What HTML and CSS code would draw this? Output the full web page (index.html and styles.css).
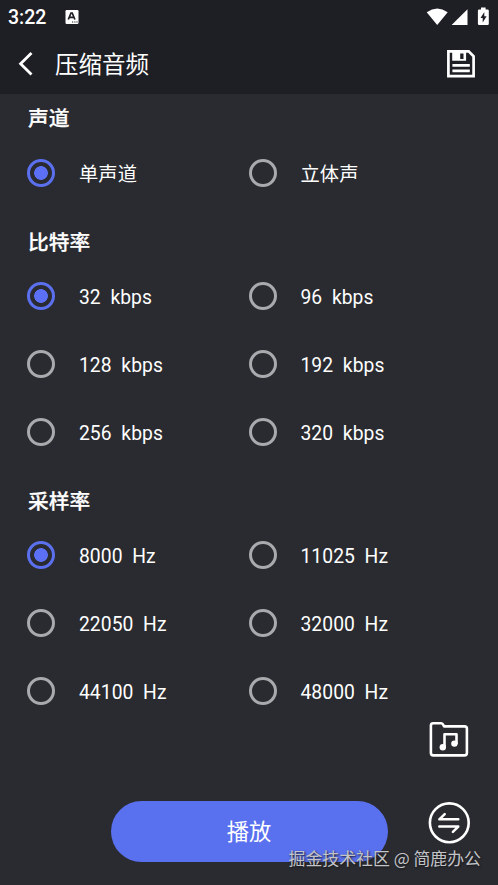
FILE: index.html
```
<!DOCTYPE html>
<html lang="zh-CN">
<head>
<meta charset="utf-8">
<title>压缩音频</title>
<link rel="stylesheet" href="styles.css">
</head>
<body>
<div class="screen">
  <header class="top">
    <div class="status">
      <span class="time">3:22</span>
      <svg class="input-icon" width="14" height="16" viewBox="0 0 14 16"><rect x="0.5" y="1" width="13" height="14" rx="1.2" fill="#fff"/><path d="M3.3 10.5 6 4h1.2l2.7 6.5M4.3 8.4h4.6" fill="none" stroke="#1e1e25" stroke-width="1.7"/><path d="M7 13h1.2M9.3 13h1.2M11.4 13h1.2" stroke="#1e1e25" stroke-width="1.2"/></svg>
      <svg class="signals" width="64" height="20" viewBox="0 0 64 20" fill="#fff"><path d="M0.7 5.2Q11.2-2.2 21.7 5.2L11.2 18Z"/><path d="M41.5 2.2V18H25.6Z"/><path fill-rule="evenodd" d="M55 0.6h4.6v1.9h2q1.2 0 1.2 1.2v13.1q0 1.2-1.2 1.2h-8.5q-1.2 0-1.2-1.2V3.7q0-1.2 1.2-1.2H55ZM58.3 5l-3.8 6h2.2v4.5l3.9-6.2h-2.3Z"/></svg>
    </div>
    <div class="bar">
      <svg class="back" width="16" height="26" viewBox="0 0 16 26"><path d="M13.5 2 2.6 12.7 13.5 23.4" fill="none" stroke="#fff" stroke-width="2.8"/></svg>
      <h1>压缩音频</h1>
      <svg class="save" width="28" height="28" viewBox="0 0 28 28"><path d="M1.4 1.4h20.3l4.9 4.9v19.9H1.4Z" fill="none" stroke="#fff" stroke-width="2.7"/><path fill="#fff" fill-rule="evenodd" d="M5.2 1.5h13.9v9.3H5.2ZM13.2 3.4v5.5h3.3V3.4Z"/><path d="M5.4 15.4h17.4M5.4 20.8h17.4" stroke="#fff" stroke-width="2.7"/></svg>
    </div>
  </header>
  <main>
    <section>
      <h2>声道</h2>
      <div class="options channels">
        <label class="option"><i class="radio on"></i><span>单声道</span></label>
        <label class="option"><i class="radio"></i><span>立体声</span></label>
      </div>
    </section>
    <section>
      <h2>比特率</h2>
      <div class="options">
        <label class="option"><i class="radio on"></i><span>32  kbps</span></label>
        <label class="option"><i class="radio"></i><span>96  kbps</span></label>
        <label class="option"><i class="radio"></i><span>128  kbps</span></label>
        <label class="option"><i class="radio"></i><span>192  kbps</span></label>
        <label class="option"><i class="radio"></i><span>256  kbps</span></label>
        <label class="option"><i class="radio"></i><span>320  kbps</span></label>
      </div>
    </section>
    <section>
      <h2>采样率</h2>
      <div class="options">
        <label class="option"><i class="radio on"></i><span>8000  Hz</span></label>
        <label class="option"><i class="radio"></i><span>11025  Hz</span></label>
        <label class="option"><i class="radio"></i><span>22050  Hz</span></label>
        <label class="option"><i class="radio"></i><span>32000  Hz</span></label>
        <label class="option"><i class="radio"></i><span>44100  Hz</span></label>
        <label class="option"><i class="radio"></i><span>48000  Hz</span></label>
      </div>
    </section>
  </main>
  <button class="play">播放</button>
  <div class="floating">
    <svg width="40" height="36" viewBox="0 0 40 36" fill="none" stroke="#fff" stroke-width="2.6" stroke-linejoin="round"><path d="M4.200 2.200h8q1 0 1.600 1l1.300 2.200H35.600q2.300 0 2.300 2.300v24.300q0 2.400-2.400 2.400H4.200q-2.300 0-2.300-2.300V4.500Q1.900 2.200 4.200 2.200Z"/><path d="M15.500 26V13.200h12v10" stroke-width="2.600"/><g fill="#fff" stroke="none"><circle cx="13.800" cy="26.200" r="3.200"/><circle cx="25.400" cy="22.600" r="3.200"/></g></svg>
    <svg width="42" height="42" viewBox="0 0 42 42" fill="none" stroke="#fff" stroke-width="2.6" stroke-linecap="round" stroke-linejoin="round"><circle cx="21.300" cy="20.800" r="19.400"/><path d="M30.300 17.300H11.300l5.400-5.200M11.300 24.600H30.300l-5.400 5.200" stroke-width="2.500"/></svg>
  </div>
  <div class="watermark">掘金技术社区 @ 简鹿办公</div>
</div>
</body>
</html>
```
FILE: styles.css
```
* { box-sizing: border-box; }
body { margin: 0; background: #2a2b30; }
.screen {
  position: relative;
  width: 498px;
  height: 885px;
  overflow: hidden;
  background: #2a2b30;
  color: #fff;
  font-family: Roboto, "Noto Sans CJK SC", sans-serif;
}
.top { height: 94px; background: #1e1e25; }
.status { display: flex; align-items: center; height: 34px; padding: 0 8px; }
.time { width: 56.5px; padding-top: 2px; font-size: 19.5px; line-height: 34px; font-weight: 500; }
.input-icon { margin-top: -1px; }
.signals { margin: -1px 0 0 auto; }
.bar { display: flex; align-items: center; height: 60px; padding: 0 23px 0 18px; }
.back { margin-right: 21px; }
h1 { margin: 0; padding-top: 2px; font-size: 23.5px; line-height: 34px; font-weight: 400; }
.save { margin-left: auto; }
h2 { margin: 0; padding: 5px 0 0 28px; height: 45px; font-size: 20.7px; line-height: 40px; font-weight: 500; -webkit-text-stroke: 0.25px #fff; }
section + section { margin-top: 10px; }
section + section h2 { padding-top: 6px; }
.options { display: grid; grid-template-columns: 221.5px 221.5px; grid-auto-rows: 68px; padding-left: 27.4px; }
.option { display: flex; align-items: center; gap: 23.6px; font-size: 19.3px; white-space: pre; }
.option span { padding-top: 3px; letter-spacing: 0.05px; }
.channels .option span { padding-top: 0; }
.radio { width: 28px; height: 28px; border: 3px solid #a9aaad; border-radius: 50%; }
.radio.on { border-color: #5b70ef; background: radial-gradient(circle, #5b70f5 6.5px, transparent 7.2px); }
.play {
  display: block;
  width: 277px;
  height: 61px;
  margin: 76px 0 0 110.5px;
  padding: 2px 0 0;
  border: 0;
  border-radius: 31px;
  background: #5970ef;
  color: #fff;
  font: 400 22.3px/59px Roboto, "Noto Sans CJK SC", sans-serif;
}
.floating {
  position: absolute;
  right: 28px;
  bottom: 41px;
  display: flex;
  flex-direction: column;
  align-items: center;
  gap: 45px;
}
.watermark {
  position: absolute;
  right: 17px;
  bottom: 15px;
  font: 400 16.9px/24px "Noto Sans CJK SC", sans-serif;
  color: #c3c4c8;
  text-shadow: 1px 1px 2px #16171c;
  white-space: nowrap;
}
```
